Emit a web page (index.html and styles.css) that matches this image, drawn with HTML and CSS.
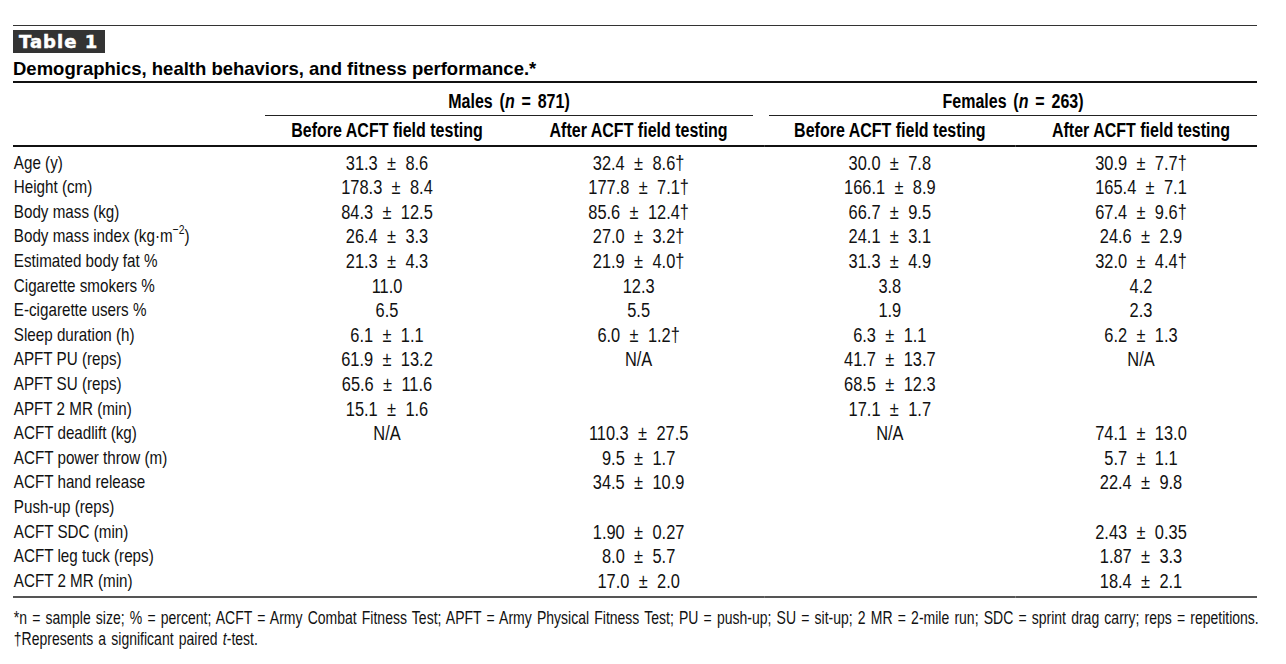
FILE: index.html
```html
<!DOCTYPE html>
<html>
<head>
<meta charset="utf-8">
<link rel="stylesheet" href="styles.css">
</head>
<body>
<div class="page">
  <div class="label-row"><span class="table-label">Table 1</span></div>
  <div class="caption">Demographics, health behaviors, and fitness performance.*</div>
  <div class="sheet">
    <table class="data">
      <colgroup>
        <col class="c-label"><col class="c1"><col class="c2"><col class="c3"><col class="c4">
      </colgroup>
      <thead>
        <tr class="group-row">
          <th></th>
          <th colspan="2"><div class="group males">Males (<i>n</i> = 871)</div></th>
          <th colspan="2"><div class="group females">Females (<i>n</i> = 263)</div></th>
        </tr>
        <tr class="sub-row">
          <th></th>
          <th>Before ACFT field testing</th>
          <th>After ACFT field testing</th>
          <th>Before ACFT field testing</th>
          <th class="last">After ACFT field testing</th>
        </tr>
      </thead>
      <tbody>
        <tr><td>Age (y)</td><td>31.3 ± 8.6</td><td>32.4 ± 8.6†</td><td>30.0 ± 7.8</td><td class="last">30.9 ± 7.7†</td></tr>
        <tr><td>Height (cm)</td><td>178.3 ± 8.4</td><td>177.8 ± 7.1†</td><td>166.1 ± 8.9</td><td class="last">165.4 ± 7.1</td></tr>
        <tr><td>Body mass (kg)</td><td>84.3 ± 12.5</td><td>85.6 ± 12.4†</td><td>66.7 ± 9.5</td><td class="last">67.4 ± 9.6†</td></tr>
        <tr><td>Body mass index (kg·m<sup>−2</sup>)</td><td>26.4 ± 3.3</td><td>27.0 ± 3.2†</td><td>24.1 ± 3.1</td><td class="last">24.6 ± 2.9</td></tr>
        <tr><td>Estimated body fat %</td><td>21.3 ± 4.3</td><td>21.9 ± 4.0†</td><td>31.3 ± 4.9</td><td class="last">32.0 ± 4.4†</td></tr>
        <tr><td>Cigarette smokers %</td><td>11.0</td><td>12.3</td><td>3.8</td><td class="last">4.2</td></tr>
        <tr><td>E-cigarette users %</td><td>6.5</td><td>5.5</td><td>1.9</td><td class="last">2.3</td></tr>
        <tr><td>Sleep duration (h)</td><td>6.1 ± 1.1</td><td>6.0 ± 1.2†</td><td>6.3 ± 1.1</td><td class="last">6.2 ± 1.3</td></tr>
        <tr><td>APFT PU (reps)</td><td>61.9 ± 13.2</td><td>N/A</td><td>41.7 ± 13.7</td><td class="last">N/A</td></tr>
        <tr><td>APFT SU (reps)</td><td>65.6 ± 11.6</td><td></td><td>68.5 ± 12.3</td><td class="last"></td></tr>
        <tr><td>APFT 2 MR (min)</td><td>15.1 ± 1.6</td><td></td><td>17.1 ± 1.7</td><td class="last"></td></tr>
        <tr><td>ACFT deadlift (kg)</td><td>N/A</td><td>110.3 ± 27.5</td><td>N/A</td><td class="last">74.1 ± 13.0</td></tr>
        <tr><td>ACFT power throw (m)</td><td></td><td>9.5 ± 1.7</td><td></td><td class="last">5.7 ± 1.1</td></tr>
        <tr><td>ACFT hand release</td><td></td><td>34.5 ± 10.9</td><td></td><td class="last">22.4 ± 9.8</td></tr>
        <tr><td>Push-up (reps)</td><td></td><td></td><td></td><td class="last"></td></tr>
        <tr><td>ACFT SDC (min)</td><td></td><td>1.90 ± 0.27</td><td></td><td class="last">2.43 ± 0.35</td></tr>
        <tr><td>ACFT leg tuck (reps)</td><td></td><td>8.0 ± 5.7</td><td></td><td class="last">1.87 ± 3.3</td></tr>
        <tr class="final"><td>ACFT 2 MR (min)</td><td></td><td>17.0 ± 2.0</td><td></td><td class="last">18.4 ± 2.1</td></tr>
      </tbody>
    </table>
    <div class="notes">
      <p>*n = sample size; % = percent; ACFT = Army Combat Fitness Test; APFT = Army Physical Fitness Test; PU = push-up; SU = sit-up; 2 MR = 2-mile run; SDC = sprint drag carry; reps = repetitions.</p>
      <p>†Represents a significant paired <i>t</i>-test.</p>
    </div>
  </div>
</div>
</body>
</html>
```

FILE: styles.css
```css
html, body {
  margin: 0;
  padding: 0;
  background: #fff;
  overflow: hidden;
}

.page {
  margin: 25px 0 0 13px;
  width: 1244px;
  border-top: 1px solid #333;
  color: #111;
  font-family: "Liberation Sans", Arial, sans-serif;
}

.label-row {
  padding-top: 4px;
  height: 23px;
}

.table-label {
  display: inline-block;
  height: 23px;
  line-height: 24px;
  padding: 0 7px 0 6px;
  background: #333;
  color: #fff;
  font-family: "DejaVu Sans", "Liberation Sans", sans-serif;
  font-weight: 700;
  font-size: 18px;
  letter-spacing: 1px;
  -webkit-text-stroke: 0.5px #fff;
}

.caption {
  font-weight: 700;
  font-size: 18.5px;
  line-height: 20px;
  padding-top: 6px;
  height: 22px;
  color: #000;
  border-bottom: 2px solid #111;
}

/* The table is set in a condensed face: lay it out wide, then narrow it. */
.sheet {
  width: 1555px;
  transform: scaleX(0.8);
  transform-origin: 0 0;
}

.data {
  width: 1555px;
  border-collapse: collapse;
  table-layout: fixed;
  font-size: 19px;
}

.c-label { width: 310px; }
.c1 { width: 315px; }
.c2 { width: 314px; }
.c3 { width: 314px; }
.c4 { width: 302px; }

.data th, .data td {
  padding: 0;
  text-align: center;
  white-space: nowrap;
}

.data th {
  font-weight: 700;
  font-size: 20px;
  color: #000;
}

.group-row th {
  height: 32px;
  vertical-align: top;
}

.group {
  padding-top: 8px;
  height: 24px;
  line-height: 20px;
  word-spacing: 3px;
  border-bottom: 1px solid #222;
}

.group.males {
  margin: 0 14px 0 5px;
}

.group.females {
  margin: 0 0 0 6px;
}

.sub-row th {
  height: 29px;
  line-height: 29px;
  border-bottom: 2px solid #111;
}

.data .last {
  padding-left: 12px;
}

.data td {
  height: 24.6px;
  line-height: 19px;
  vertical-align: bottom;
  font-size: 20.5px;
  word-spacing: 6px;
}

.data td:first-child {
  text-align: left;
  padding-left: 1px;
  font-size: 19px;
  word-spacing: 0;
}

.data tbody {
  border-bottom: 2px solid #555;
}

.data tbody tr.final td {
  padding-bottom: 6px;
}

sup {
  font-size: 13px;
  line-height: 0;
  vertical-align: 8px;
}

.notes {
  padding-top: 10px;
  font-size: 17.5px;
  line-height: 21px;
}

.notes p {
  margin: 0;
  padding-left: 1px;
  white-space: nowrap;
  word-spacing: 1.6px;
}
```
